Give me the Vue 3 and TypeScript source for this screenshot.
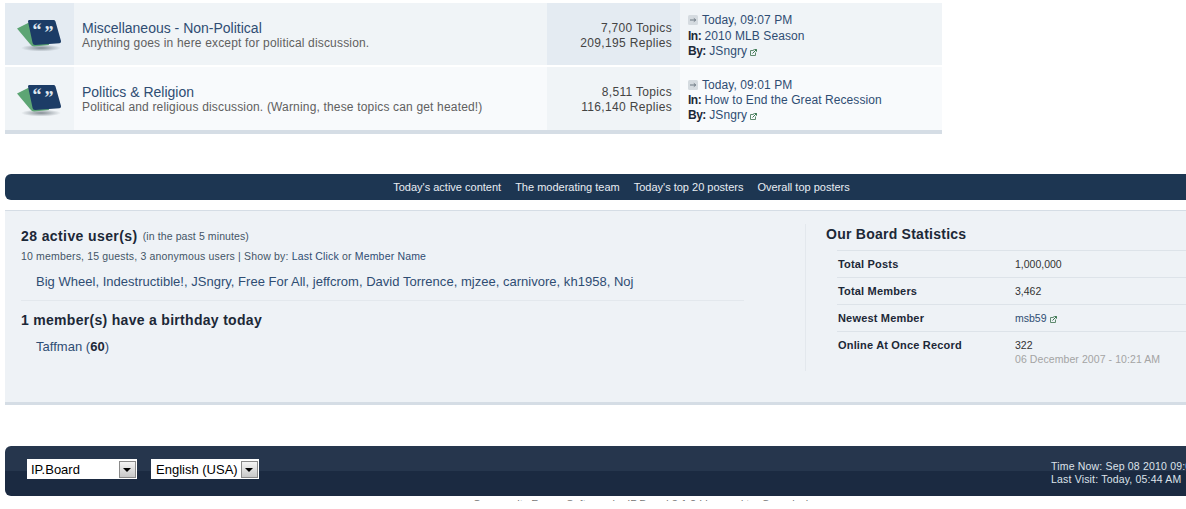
<script setup lang="ts">
interface Forum {
  name: string
  desc: string
  topics: string
  replies: string
  time: string
  topic: string
}

interface Stat {
  label: string
  value: string
  link?: boolean
  note?: string
}

const forums: Forum[] = [
  {
    name: 'Miscellaneous - Non-Political',
    desc: 'Anything goes in here except for political discussion.',
    topics: '7,700 Topics',
    replies: '209,195 Replies',
    time: 'Today, 09:07 PM',
    topic: '2010 MLB Season',
  },
  {
    name: 'Politics & Religion',
    desc: 'Political and religious discussion. (Warning, these topics can get heated!)',
    topics: '8,511 Topics',
    replies: '116,140 Replies',
    time: 'Today, 09:01 PM',
    topic: 'How to End the Great Recession',
  },
]

const navLinks = ["Today's active content", 'The moderating team', "Today's top 20 posters", 'Overall top posters']

const members = 'Big Wheel, Indestructible!, JSngry, Free For All, jeffcrom, David Torrence, mjzee, carnivore, kh1958, Noj'

const stats: Stat[] = [
  { label: 'Total Posts', value: '1,000,000' },
  { label: 'Total Members', value: '3,462' },
  { label: 'Newest Member', value: 'msb59', link: true },
  { label: 'Online At Once Record', value: '322', note: '06 December 2007 - 10:21 AM' },
]
</script>

<template>
  <div class="page">
    <section class="forums">
      <div v-for="(forum, i) in forums" :key="forum.name" class="row" :class="{ 'row--alt': i === 1 }">
        <div class="row__icon">
          <svg width="47" height="36" viewBox="0 0 47 36">
            <defs>
              <radialGradient :id="'shade' + i">
                <stop offset="0" stop-color="#56616a" stop-opacity="0.7" />
                <stop offset="1" stop-color="#56616a" stop-opacity="0" />
              </radialGradient>
            </defs>
            <ellipse cx="25" cy="31" rx="20" ry="3.5" :fill="'url(#shade' + i + ')'" />
            <path d="M1 11.5 L12 6 L30 8 L33 28 L18 29.5 Q16 29.5 14 27 Z" fill="#5da574" />
            <path d="M13 3 L38 3 Q39 3 39.5 4.5 L45 24 Q45.5 26 43.5 26.2 L19 28 Q17 28 16.6 26 L12 4.5 Q12 3 13 3 Z" fill="#1c3c66" />
            <text x="16.5" y="19" class="quote">“</text>
            <text x="28.5" y="22" class="quote">”</text>
          </svg>
        </div>
        <div class="row__main">
          <a class="row__name">{{ forum.name }}</a>
          <p class="row__desc">{{ forum.desc }}</p>
        </div>
        <div class="row__stats">
          <span>{{ forum.topics }}</span>
          <span>{{ forum.replies }}</span>
        </div>
        <div class="row__last">
          <div>
            <svg class="go" width="10" height="10" viewBox="0 0 10 10">
              <rect width="10" height="10" rx="1.5" fill="#d5dbe0" />
              <path d="M2 5 H7.5 M5.8 3.4 L7.8 5 L5.8 6.6" fill="none" stroke="#6d7882" stroke-width="1" />
            </svg>
            <a>{{ forum.time }}</a>
          </div>
          <div><b>In:</b> <a>{{ forum.topic }}</a></div>
          <div>
            <b>By:</b> <a>JSngry</a>
            <svg class="ext" width="7" height="7" viewBox="0 0 7 7">
              <path d="M0.5 1.5 H3.5 V0.5 M0.5 1.5 V6.5 H5.5 V3.5" fill="none" stroke="#5f8a6e" />
              <path d="M2.5 4.5 L6.5 0.5 M4.3 0.5 H6.5 V2.7" fill="none" stroke="#3f7a55" />
            </svg>
          </div>
        </div>
      </div>
    </section>

    <nav class="nav">
      <a v-for="link in navLinks" :key="link">{{ link }}</a>
    </nav>

    <section class="board">
      <div class="board__left">
        <h4 class="active"><b>28 active user(s)</b> <small>(in the past 5 minutes)</small></h4>
        <p class="counts">10 members, 15 guests, 3 anonymous users | Show by: <a>Last Click</a> or <a>Member Name</a></p>
        <p class="names">{{ members }}</p>
        <h4 class="birthday">1 member(s) have a birthday today</h4>
        <p class="names names--single">Taffman (<b>60</b>)</p>
      </div>
      <div class="board__right">
        <h4 class="stats-title">Our Board Statistics</h4>
        <dl class="stats">
          <div v-for="stat in stats" :key="stat.label" class="stats__row">
            <dt>{{ stat.label }}</dt>
            <dd>
              <a v-if="stat.link">{{ stat.value }}</a>
              <template v-else>{{ stat.value }}</template>
              <svg v-if="stat.link" class="ext" width="7" height="7" viewBox="0 0 7 7">
                <path d="M0.5 1.5 H3.5 V0.5 M0.5 1.5 V6.5 H5.5 V3.5" fill="none" stroke="#5f8a6e" />
                <path d="M2.5 4.5 L6.5 0.5 M4.3 0.5 H6.5 V2.7" fill="none" stroke="#3f7a55" />
              </svg>
              <span v-if="stat.note" class="stats__note">{{ stat.note }}</span>
            </dd>
          </div>
        </dl>
      </div>
    </section>

    <footer class="foot">
      <div class="foot__selects">
        <div class="select select--skin">
          <span>IP.Board</span>
          <i class="select__btn"></i>
        </div>
        <div class="select">
          <span>English (USA)</span>
          <i class="select__btn"></i>
        </div>
      </div>
      <div class="foot__times">
        <span>Time Now: Sep 08 2010 09:09 PM</span>
        <span>Last Visit: Today, 05:44 AM</span>
      </div>
    </footer>

    <div class="cutoff"><span>Community Forum Software by IP.Board 3.1.2 Licensed to: Organissimo</span></div>
  </div>
</template>

<style>
html,
body {
  margin: 0;
  background: #fff;
  overflow: hidden;
}
</style>

<style scoped>
.page {
  width: 1186px;
  height: 509px;
  overflow: hidden;
  box-sizing: border-box;
  padding: 3px 0 0 5px;
  font-family: 'Liberation Sans', Arial, sans-serif;
  font-size: 12px;
  color: #1d3652;
}

a {
  color: #2f4d73;
}

.forums {
  width: 937px;
  border-bottom: 4px solid #d5dde5;
}

.row {
  display: grid;
  grid-template-columns: 69px 473px 133px 262px;
  height: 62px;
  margin-bottom: 2px;
  background: #f0f4f7;
}

.row--alt {
  height: 63px;
  margin-bottom: 0;
  background: #f8fafc;
}

.row__icon {
  display: flex;
  justify-content: center;
  align-items: center;
  padding-top: 2px;
  background: #e4ebf2;
}

.row--alt .row__icon {
  background: #f0f4f7;
}

.quote {
  font-family: 'Liberation Serif', serif;
  font-size: 18px;
  font-weight: bold;
  fill: #dfe6ee;
}

.row__main {
  padding: 17px 0 0 8px;
}

.row__name {
  display: block;
  font-size: 14px;
  line-height: 16px;
}

.row__desc {
  margin: 0;
  font-size: 12px;
  line-height: 14px;
  letter-spacing: 0.17px;
  color: #606060;
}

.row__stats {
  display: flex;
  flex-direction: column;
  align-items: flex-end;
  padding: 18px 8px 0 0;
  font-size: 12px;
  line-height: 15px;
  letter-spacing: 0.33px;
  color: #444;
  background: #e4ebf2;
}

.row--alt .row__stats {
  background: #f0f4f7;
}

.row__last {
  padding: 10px 0 0 8px;
  font-size: 12px;
  line-height: 15px;
  letter-spacing: 0.08px;
  color: #1c2837;
}

.row__last b {
  letter-spacing: -0.5px;
}

.row:not(.row--alt) .row__last div + div {
  padding-top: 1px;
  margin-bottom: -1px;
}

.row--alt .row__last {
  padding-top: 11px;
}

.go {
  margin-right: 4px;
  vertical-align: -1px;
}

.ext {
  margin-left: 3px;
  vertical-align: -1px;
}

.nav {
  display: flex;
  justify-content: center;
  gap: 14px;
  height: 26px;
  margin-top: 40px;
  padding-left: 52px;
  border-radius: 6px 0 0 6px;
  background: #1d3652;
  font-size: 11px;
  line-height: 26px;
  box-sizing: border-box;
}

.nav a {
  color: #e8edf2;
}

.board {
  display: flex;
  height: 195px;
  margin-top: 10px;
  box-sizing: border-box;
  border-top: 1px solid #d5dde5;
  border-bottom: 3px solid #d5dde5;
  background: #eef2f6;
}

.board__left {
  width: 740px;
  box-sizing: border-box;
  padding: 16px 0 0 16px;
}

.active,
.birthday,
.stats-title {
  margin: 0;
  font-size: 14px;
  line-height: 18px;
  font-weight: bold;
  letter-spacing: 0.3px;
  color: #1c2837;
}

.active b {
  letter-spacing: 0.4px;
}

.active small {
  margin-left: 1px;
  font-size: 10.5px;
  font-weight: normal;
  letter-spacing: 0.1px;
  vertical-align: 1px;
  color: #445566;
}

.counts {
  margin: 4px 0 0;
  font-size: 10.5px;
  line-height: 14px;
  letter-spacing: 0.17px;
  color: #445566;
}

.names {
  width: 708px;
  margin: 11px 0 0;
  padding: 0 0 10px 15px;
  border-bottom: 1px solid #e3e8ed;
  font-size: 13px;
  line-height: 16px;
  letter-spacing: 0.02px;
  color: #2f4d73;
}

.names--single {
  margin-top: 10px;
  border: 0;
}

.names b {
  color: #1c2837;
}

.birthday {
  margin-top: 10px;
}

.board__right {
  flex: 1;
  margin: 13px 0 31px 60px;
  padding: 0 0 0 20px;
  border-left: 1px solid #e3e8ed;
}

.stats-title {
  line-height: 20px;
  letter-spacing: 0.25px;
}

.stats {
  margin: 6px 0 0 11px;
}

.stats__row {
  display: flex;
  height: 27px;
  padding-top: 6px;
  box-sizing: border-box;
  border-top: 1px solid #dde3e9;
  font-size: 10.5px;
  line-height: 14px;
}

.stats__row dt {
  width: 177px;
  flex: none;
  font-size: 11px;
  font-weight: bold;
  letter-spacing: 0.18px;
  color: #1c2837;
  padding-left: 1px;
}

.stats__row dd {
  margin: 0;
  color: #333;
}

.stats__note {
  display: block;
  letter-spacing: 0.08px;
  color: #a4a4a4;
}

.foot {
  display: flex;
  justify-content: space-between;
  height: 50px;
  margin-top: 41px;
  padding: 13px 5px 0 22px;
  box-sizing: border-box;
  border-radius: 6px 0 0 6px;
  background: linear-gradient(#26364d 0, #26364d 50%, #1b2a41 50%, #1b2a41 100%);
}

.foot__selects {
  display: flex;
  gap: 14px;
  height: 20px;
}

.select {
  display: flex;
  justify-content: space-between;
  align-items: center;
  box-sizing: border-box;
  height: 20px;
  padding: 1px 1px 1px 5px;
  gap: 3px;
  background: #fff;
  color: #000;
  font-size: 13px;
}

.select--skin {
  width: 110px;
  padding-left: 4px;
}

.select__btn {
  position: relative;
  display: block;
  width: 17px;
  height: 17px;
  box-sizing: border-box;
  border: 1px solid #8a8a8a;
  background: linear-gradient(#f4f4f4, #c8c8c8);
}

.select__btn::after {
  content: '';
  position: absolute;
  left: 3px;
  top: 6px;
  border: 4px solid transparent;
  border-top: 4px solid #000;
  border-bottom: 0;
}

.foot__times {
  display: flex;
  flex-direction: column;
  width: 130px;
  flex: none;
  font-size: 10.5px;
  line-height: 13px;
  letter-spacing: 0.18px;
  color: #dde3ea;
  white-space: nowrap;
  padding-top: 1px;
}

.cutoff {
  height: 5px;
  box-sizing: border-box;
  padding: 2px 0 0 105px;
  overflow: hidden;
  text-align: center;
  font-size: 11px;
  line-height: 12px;
  color: #777;
}
</style>
